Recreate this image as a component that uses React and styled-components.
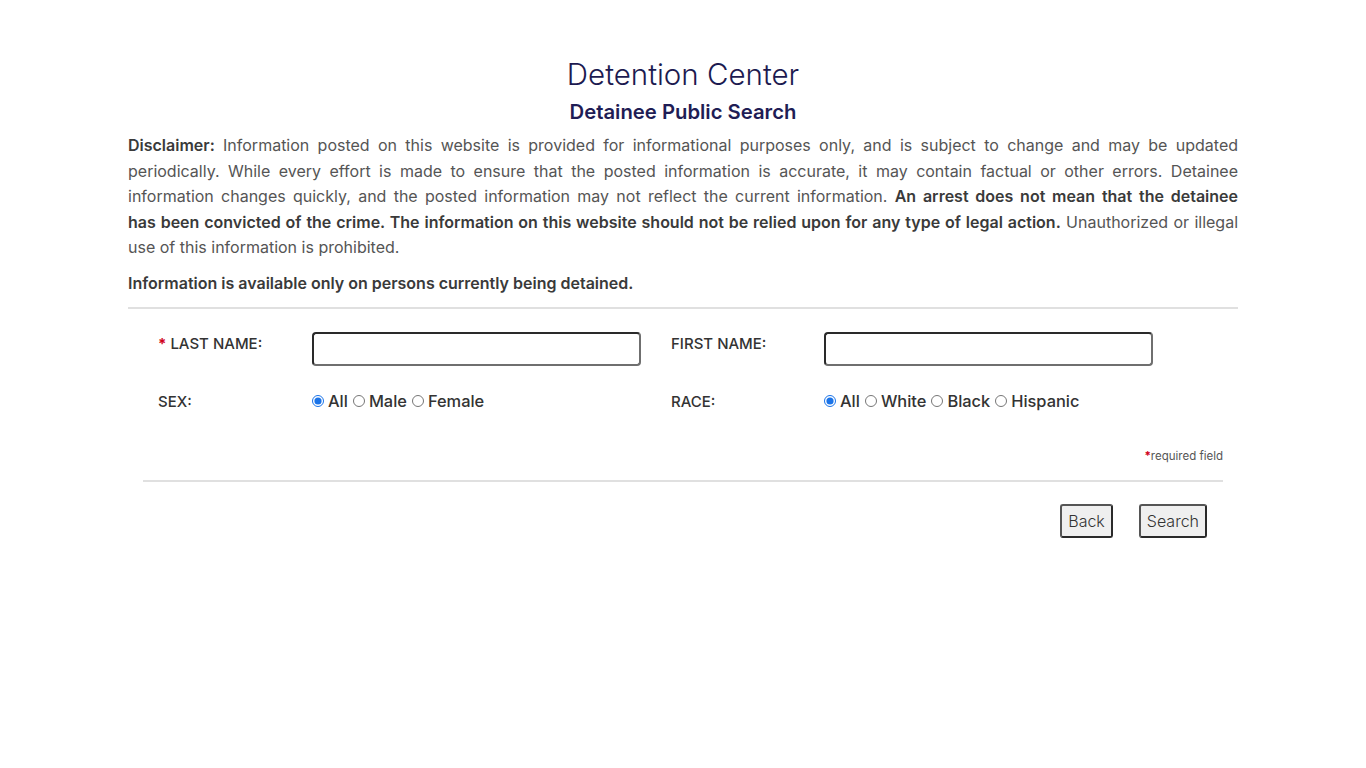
import React from "react";
import styled, { createGlobalStyle } from "styled-components";

const GlobalStyle = createGlobalStyle`
  html, body { margin: 0; padding: 0; background: #fff; }
  body { font-family: "Inter", "Noto Sans", sans-serif; color: #555; }
  * { box-sizing: border-box; }
`;

const Container = styled.div`
  width: 1110px;
  margin: 0 auto;
  padding-top: 57px;
`;

const Title = styled.h1`
  margin: 0;
  text-align: center;
  font-size: 29.5px;
  line-height: 34px;
  font-weight: 300;
  color: #1c1a50;
`;

const Subtitle = styled.h2`
  margin: 9px 0 0;
  text-align: center;
  font-size: 20.3px;
  line-height: 24px;
  font-weight: 600;
  color: #1f1d55;
`;

const Paragraph = styled.p`
  margin: ${(p) => p.$mt || "0"} 0 0;
  font-size: 16px;
  line-height: 25.6px;
  color: #555;
  text-align: justify;
  font-weight: 400;
`;

const Strong = styled.strong`
  font-weight: 600;
  color: #3a3a3a;
`;

const Rule = styled.hr`
  margin: ${(p) => p.$m || "0"};
  border: 0;
  border-top: 2px solid #e0e0e0;
  height: 0;
`;

const Form = styled.form`
  padding: 0 15px;
`;

const FieldGrid = styled.div`
  display: grid;
  grid-template-columns: 154px 359px 153px 1fr;
  row-gap: 24px;
  padding: 23px 0 0 15px;
  align-items: start;
`;

const Label = styled.label`
  padding-top: 1px;
  font-size: 15px;
  line-height: 22px;
  font-weight: 500;
  color: #333;
`;

const Req = styled.span`
  color: #d0021b;
  font-weight: 700;
`;

const TextInput = styled.input`
  width: 329px;
  height: 34px;
  border: 2px solid #2a2a2a;
  border-right-color: #6f6f6f;
  border-bottom-color: #6f6f6f;
  border-radius: 4px;
  padding: 0 8px;
  font: inherit;
  font-size: 15px;
  background: #fff;
  outline: none;
`;

const RadioGroup = styled.div`
  display: flex;
  align-items: center;
  height: 22px;
  font-size: 16.4px;
  font-weight: 500;
  color: #333;
`;

const RadioOption = styled.label`
  display: inline-flex;
  align-items: center;
  margin-right: 5px;
  input {
    width: 12px;
    height: 12px;
    margin: 0 4px 0 0;
    accent-color: #1a73e8;
  }
`;

const RequiredNote = styled.div`
  text-align: right;
  font-size: 11.5px;
  line-height: 14px;
  color: #555;
  margin-top: 36px;
`;

const Buttons = styled.div`
  display: flex;
  justify-content: flex-end;
  gap: 26px;
  padding: 22px 16px 0 0;
`;

const Button = styled.button`
  height: 34px;
  padding: 0 6px;
  background: #efefef;
  border: 2px solid #555;
  border-right-color: #2a2a2a;
  border-bottom-color: #2a2a2a;
  border-radius: 3px;
  font-family: "Inter", sans-serif;
  font-size: 16px;
  font-weight: 300;
  color: #333;
  cursor: pointer;
`;

function Radios({ name, options }) {
  return (
    <RadioGroup>
      {options.map((o, i) => (
        <RadioOption key={o}>
          <input type="radio" name={name} defaultChecked={i === 0} />
          {o}
        </RadioOption>
      ))}
    </RadioGroup>
  );
}

export default function App() {
  return (
    <>
      <GlobalStyle />
      <Container>
        <Title>Detention Center</Title>
        <Subtitle>Detainee Public Search</Subtitle>
        <Paragraph $mt="9px">
          <Strong>Disclaimer:</Strong> Information posted on this website is provided for
          informational purposes only, and is subject to change and may be updated periodically.
          While every effort is made to ensure that the posted information is accurate, it may
          contain factual or other errors. Detainee information changes quickly, and the posted
          information may not reflect the current information.{" "}
          <Strong>
            An arrest does not mean that the detainee has{"\u00a0"}been convicted of the crime. The
            information on this website should not be relied upon for any type of legal action.
          </Strong>{" "}
          Unauthorized or illegal use{"\u00a0"}of this information is prohibited.
        </Paragraph>
        <Paragraph $mt="10px">
          <Strong>Information is available only on persons currently being detained.</Strong>
        </Paragraph>
        <Rule $m="10px 0 0" />
        <Form onSubmit={(e) => e.preventDefault()}>
          <FieldGrid>
            <Label>
              <Req>*</Req> LAST NAME:
            </Label>
            <div>
              <TextInput type="text" />
            </div>
            <Label>FIRST NAME:</Label>
            <div>
              <TextInput type="text" />
            </div>
            <Label>SEX:</Label>
            <Radios name="sex" options={["All", "Male", "Female"]} />
            <Label>RACE:</Label>
            <Radios name="race" options={["All", "White", "Black", "Hispanic"]} />
          </FieldGrid>
          <RequiredNote>
            <Req>*</Req>required field
          </RequiredNote>
          <Rule $m="17px 0 0" />
          <Buttons>
            <Button type="button">Back</Button>
            <Button type="submit">Search</Button>
          </Buttons>
        </Form>
      </Container>
    </>
  );
}
